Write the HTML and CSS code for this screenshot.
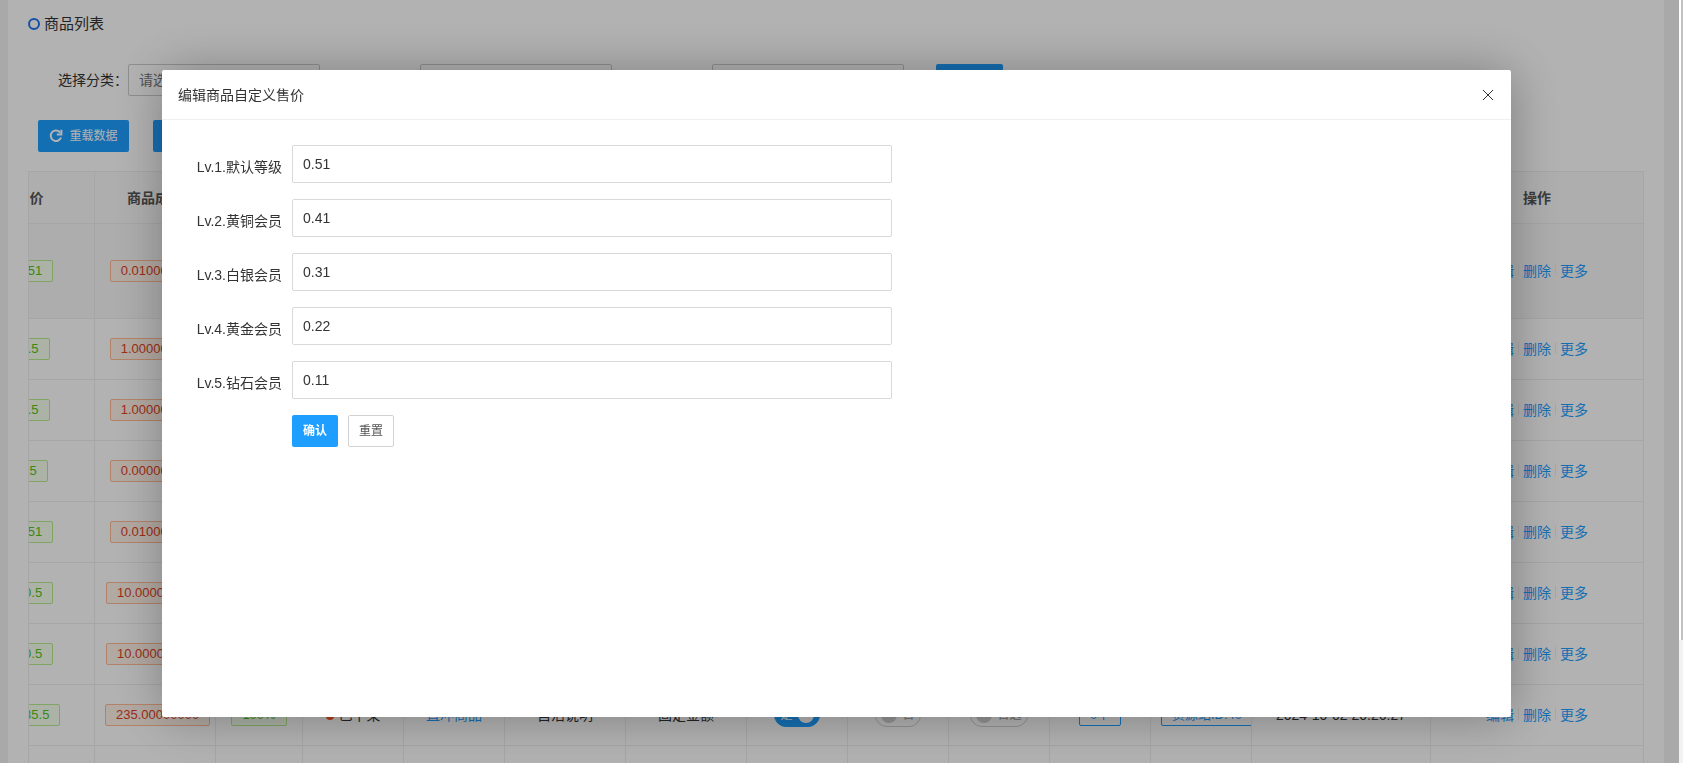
FILE: index.html
```
<!doctype html>
<html lang="zh-CN">
<head>
	<meta charset="UTF-8">
	<meta name="viewport" content="width=device-width, initial-scale=1">
	<title>商品列表</title>
	<link rel="stylesheet" href="styles.css">
</head>
<body>
	<div class="card">
		<div class="card-header"><i class="circle"></i>商品列表</div>
		<form class="search">
			<label for="cate">选择分类：</label>
			<select id="cate" class="ctrl"><option>请选择</option></select>
			<select class="ctrl" aria-label="状态"><option></option></select>
			<input class="ctrl" type="text" aria-label="关键词">
			<button type="button" class="btn btn-search">搜索</button>
		</form>
		<div class="tools">
			<button type="button" class="btn">
				<svg width="14" height="14" viewBox="0 0 14 14" fill="none" stroke="currentColor" stroke-width="2"><path d="M11.3 3.6A5.3 5.3 0 1 0 12 8.5"/><path d="M12.4 .8v4.7H7.8" /></svg>
				重载数据
			</button>
			<button type="button" class="btn">添加商品</button>
		</div>
		<div class="table-box">
			<table>
				<colgroup>
					<col class="w130"><col class="w121"><col class="w87"><col class="w101"><col class="w101">
					<col class="w121"><col class="w121"><col class="w101"><col class="w101"><col class="w101">
					<col class="w101"><col class="w101"><col><col class="w212">
				</colgroup>
				<thead>
					<tr><th>售价</th><th>商品成本</th><th>利润</th><th>状态</th><th>类型</th><th>说明</th><th>加价</th><th>上架</th><th>推荐</th><th>选择</th><th>订单</th><th>货源</th><th>创建时间</th><th>操作</th></tr>
				</thead>
				<tbody id="list"></tbody>
			</table>
		</div>
	</div>
	<div class="scrollbar"></div>

	<div class="shade"></div>
	<div class="layer" role="dialog" aria-labelledby="layer_title">
		<div class="layer-title">
			<span id="layer_title">编辑商品自定义售价</span>
			<button type="button" class="close" aria-label="关闭">
				<svg width="12" height="12" viewBox="0 0 12 12" stroke="currentColor"><path d="M1 1l10 10M11 1L1 11"/></svg>
			</button>
		</div>
		<form class="layer-form">
			<div class="form-item">
				<label for="lv1">Lv.1.默认等级</label>
				<input type="text" id="lv1" value="0.51">
			</div>
			<div class="form-item">
				<label for="lv2">Lv.2.黄铜会员</label>
				<input type="text" id="lv2" value="0.41">
			</div>
			<div class="form-item">
				<label for="lv3">Lv.3.白银会员</label>
				<input type="text" id="lv3" value="0.31">
			</div>
			<div class="form-item">
				<label for="lv4">Lv.4.黄金会员</label>
				<input type="text" id="lv4" value="0.22">
			</div>
			<div class="form-item">
				<label for="lv5">Lv.5.钻石会员</label>
				<input type="text" id="lv5" value="0.11">
			</div>
			<div class="form-btns">
				<button type="button" class="btn btn-ok">确认</button>
				<button type="reset" class="btn btn-reset">重置</button>
			</div>
		</form>
	</div>
	<script>
		let data = [
			['0.51', '0.01000000'],
			['1.5', '1.00000000'],
			['1.5', '1.00000000'],
			['15', '0.00000000'],
			['0.51', '0.01000000'],
			['10.5', '10.00000000'],
			['10.5', '10.00000000'],
			['1235.5', '235.00000000'],
			['0.5', '0.01000000']
		];
		let oList = document.getElementById('list');
		data.forEach((item, i) => {
			oList.insertAdjacentHTML('beforeend', `<tr class="${i == 0 ? 'hover' : ''}">
				<td><span class="tag green">${item[0]}</span></td>
				<td><span class="tag red">${item[1]}</span></td>
				<td><span class="tag green">100%</span></td>
				<td><i class="dot"></i>已下架</td>
				<td><a href="#">直冲商品</a></td>
				<td>自活说明</td>
				<td>固定金额</td>
				<td><button type="button" class="switch on">是<i></i></button></td>
				<td><button type="button" class="switch"><i></i>否</button></td>
				<td><button type="button" class="switch"><i></i>否选</button></td>
				<td><span class="tag blue">0个</span></td>
				<td><span class="tag blue">货源站ID:40</span></td>
				<td>2024-10-02 20:26:27</td>
				<td><a href="#">编辑</a><b></b><a href="#">删除</a><b></b><a href="#">更多</a></td>
			</tr>`);
		});
	</script>
</body>
</html>
```
FILE: styles.css
```
*{
	margin:0;
	padding:0;
	box-sizing:border-box;
}
body, html{
	height:100%;
	overflow:hidden;
}
body{
	background-color:#f2f2f2;
	color:#333;
	font:14px/20px "Liberation Sans", Arial, "Noto Sans CJK SC", sans-serif;
}
button, input, select{
	font:inherit;
	color:inherit;
}
a{
	color:#1e9fff;
	text-decoration:none;
}
.card{
	margin:0 19px 0 8px;
	padding:0 20px;
	background-color:#fff;
}
.card-header{
	display:flex;
	align-items:center;
	gap:4px;
	height:48px;
	font-size:15px;
}
.circle{
	width:12px;
	height:12px;
	border:2px solid #1e74ee;
	border-radius:50%;
}
.search{
	display:flex;
	align-items:center;
	padding:16px 0 0 30px;
}
.search label{
	width:70px;
	white-space:nowrap;
}
.ctrl{
	appearance:none;
	width:192px;
	height:32px;
	margin-right:100px;
	padding:0 10px;
	border:1px solid #ccc;
	border-radius:2px;
	background-color:#fff;
	color:#757575;
}
.btn{
	display:inline-flex;
	align-items:center;
	justify-content:center;
	gap:6px;
	height:32px;
	padding:0 10px;
	border:none;
	border-radius:2px;
	background-color:#1e9fff;
	color:#fff;
	font-size:12px;
}
.btn-search{
	width:67px;
	margin-left:-68px;
}
.tools{
	display:flex;
	gap:24px;
	padding:24px 0 19px 10px;
}
.tools .btn{
	width:91px;
}
.table-box{
	overflow:hidden;
	border:1px solid #eee;
	border-bottom:none;
}
table{
	width:calc(100% + 64px);
	margin-left:-64px;
	table-layout:fixed;
	border-collapse:separate;
	border-spacing:0;
}
th, td{
	height:61px;
	padding:0 10px;
	border-right:1px solid #eee;
	border-bottom:1px solid #eee;
	text-align:center;
	white-space:nowrap;
	overflow:hidden;
}
th{
	height:52px;
	background-color:#fafafa;
	color:#555;
	font-weight:bold;
}
.hover td{
	height:95px;
	background-color:#f8f8f8;
}
th:last-child, td:last-child{
	border-right:none;
}
td b{
	display:inline-block;
	width:1px;
	height:12px;
	margin:0 4px;
	background-color:#eee;
}
.w87{ width:87px; }
.w101{ width:101px; }
.w121{ width:121px; }
.w130{ width:130px; }
.w212{ width:212px; }
.tag{
	display:inline-block;
	padding:0 10px;
	border:1px solid;
	border-radius:2px;
	font-size:13px;
	vertical-align:middle;
}
.green{
	border-color:#b7eb8f;
	background-color:#f6ffed;
	color:#52c41a;
}
.red{
	border-color:#ffbb96;
	background-color:#fff2e8;
	color:#e0411c;
}
.blue{
	border-color:#1e9fff;
	color:#1e9fff;
}
.dot{
	display:inline-block;
	width:8px;
	height:8px;
	margin-right:5px;
	border-radius:50%;
	background-color:#ff5722;
}
.switch{
	display:inline-flex;
	align-items:center;
	gap:5px;
	height:24px;
	padding:0 5px;
	border:1px solid #d2d2d2;
	border-radius:12px;
	background-color:#fff;
	color:#999;
	font-size:12px;
	vertical-align:middle;
}
.switch i{
	width:16px;
	height:16px;
	border-radius:50%;
	background-color:#d2d2d2;
}
.switch.on{
	border-color:#1e9fff;
	background-color:#1e9fff;
	color:#fff;
}
.switch.on i{
	background-color:#fff;
}
.scrollbar{
	position:fixed;
	top:0;
	right:0;
	width:4px;
	height:640px;
	border-left:2px solid #fff;
	background-color:#c1c1c1;
}
/* 遮罩 */
.shade{
	position:fixed;
	inset:0 4px 0 0;
	background-color:rgba(0,0,0,.3);
}
/* 弹窗 */
.layer{
	position:fixed;
	inset:70px 172px 46px 162px;
	border-radius:2px;
	background-color:#fff;
	box-shadow:1px 1px 50px rgba(0,0,0,.3);
}
.layer-title{
	display:flex;
	align-items:center;
	justify-content:space-between;
	height:50px;
	padding:0 17px 0 16px;
	border-bottom:1px solid #f0f0f0;
}
.close{
	display:flex;
	border:none;
	background:none;
}
.layer-form{
	padding:25px 30px;
}
.form-item{
	display:flex;
	margin-bottom:16px;
}
.form-item label{
	width:100px;
	padding:12px 10px 0 0;
	text-align:right;
	white-space:nowrap;
}
.form-item input{
	flex:0 1 600px;
	min-width:0;
	height:38px;
	padding:0 10px;
	border:1px solid #d9d9d9;
	border-radius:2px;
}
.form-btns{
	display:flex;
	gap:10px;
	padding-left:100px;
}
.btn-ok{
	font-weight:bold;
}
.btn-reset{
	border:1px solid #d2d2d2;
	background-color:#fff;
	color:#555;
}
.form-btns .btn{
	width:46px;
}
```
